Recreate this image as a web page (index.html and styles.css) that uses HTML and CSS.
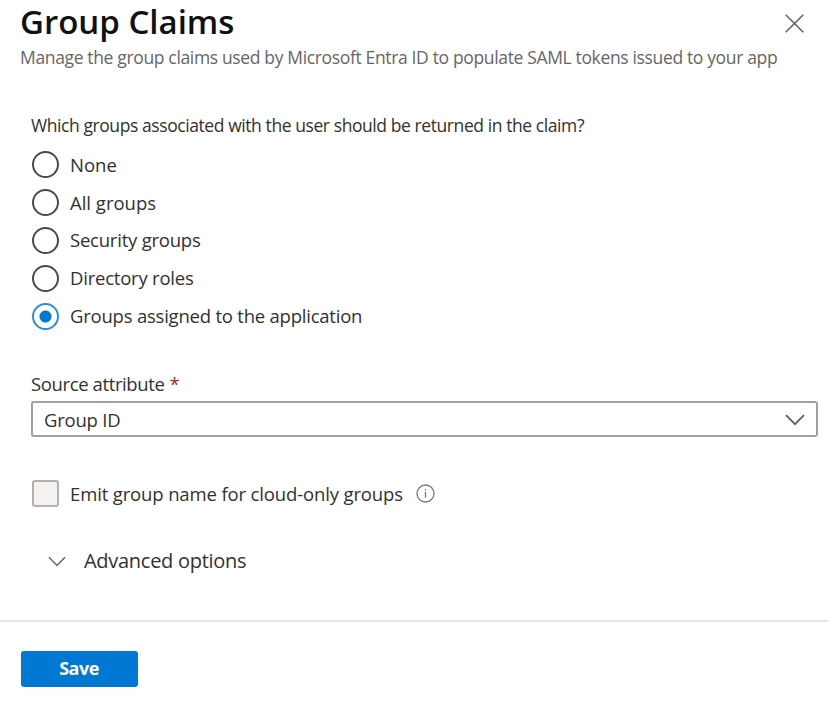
FILE: index.html
```html
<!DOCTYPE html>
<html lang="en">
<head>
    <meta charset="UTF-8">
    <meta name="viewport" content="width=device-width, initial-scale=1.0">
    <title>Group Claims</title>
    <link rel="stylesheet" href="styles.css">
</head>
<body>
    <div class="panel">
        <header class="panel-header">
            <div class="title-row">
                <h1>Group Claims</h1>
                <button type="button" class="close-button" aria-label="Close">
                    <svg width="20" height="20" viewBox="0 0 20 20" fill="none" stroke="#606060" stroke-width="1.5">
                        <path d="M1.7 1.7L19.3 19.3M19.3 1.7L1.7 19.3"/>
                    </svg>
                </button>
            </div>
            <p class="subtitle">Manage the group claims used by Microsoft Entra ID to populate SAML tokens issued to your app</p>
        </header>

        <form class="claims-form">
            <p class="question">Which groups associated with the user should be returned in the claim?</p>
            <div class="radio-group">
                <label class="radio wide"><input type="radio" name="groups"><span>None</span></label>
                <label class="radio wide"><input type="radio" name="groups"><span>All groups</span></label>
                <label class="radio"><input type="radio" name="groups"><span>Security groups</span></label>
                <label class="radio"><input type="radio" name="groups"><span>Directory roles</span></label>
                <label class="radio"><input type="radio" name="groups" checked><span>Groups assigned to the application</span></label>
            </div>

            <div class="field-label"><span>Source attribute</span><span class="required">*</span></div>
            <div class="dropdown" role="combobox" tabindex="0">
                <span>Group ID</span>
                <svg width="20" height="12" viewBox="0 0 20 12" fill="none" stroke="#606060" stroke-width="1.8">
                    <path d="M1 1.2L10 10.2L19 1.2"/>
                </svg>
            </div>

            <div class="checkbox-row">
                <label class="checkbox"><input type="checkbox" disabled><span>Emit group name for cloud-only groups</span></label>
                <svg class="info" width="19" height="19" viewBox="0 0 19 19" fill="none" stroke="#777" stroke-width="1.3">
                    <circle cx="9.5" cy="9.5" r="8.5"/>
                    <path d="M9.5 8v5.5M9.5 5v1.6"/>
                </svg>
            </div>

            <div class="advanced">
                <svg width="18" height="11" viewBox="0 0 18 11" fill="none" stroke="#666" stroke-width="1.5">
                    <path d="M1 1.2L9 9.4L17 1.2"/>
                </svg>
                <span>Advanced options</span>
            </div>
        </form>

        <footer class="panel-footer">
            <button type="button" class="save-button">Save</button>
        </footer>
    </div>
</body>
</html>
```

FILE: styles.css
```css
* {
    box-sizing: border-box;
}

body {
    margin: 0;
    background-color: #fff;
    font-family: 'Open Sans', 'Noto Sans', sans-serif;
    font-size: 18.5px;
    letter-spacing: -0.22px;
    color: #323130;
    white-space: nowrap;
}

h1,
p {
    margin: 0;
}

.panel {
    display: flex;
    flex-direction: column;
    height: 708px;
}

.panel-header {
    padding: 0 24px 0 20px;
}

.title-row {
    display: flex;
    justify-content: space-between;
    height: 42px;
}

h1 {
    font-size: 33px;
    font-weight: 600;
    line-height: 43px;
    letter-spacing: 0;
    color: #111;
}

.close-button {
    display: flex;
    padding: 13px 0 0;
    border: none;
    background: none;
}

.subtitle {
    font-size: 17.5px;
    line-height: 30px;
    color: #666;
    letter-spacing: -0.35px;
}

.claims-form {
    height: 548px;
    padding: 40px 10px 0 31px;
}

.question {
    font-size: 17.5px;
    line-height: 26px;
    letter-spacing: -0.42px;
}

.radio-group {
    height: 233px;
    padding: 8px 0 0 1px;
}

.radio,
.checkbox {
    display: flex;
    align-items: center;
    gap: 11px;
    height: 37.8px;
}

.radio span,
.checkbox span {
    padding-bottom: 1px;
}

.radio.wide {
    letter-spacing: 0;
}

.radio input {
    appearance: none;
    width: 27px;
    height: 27px;
    margin: 0;
    border: 2px solid #4a4a4a;
    border-radius: 50%;
}

.radio input:checked {
    border-color: #2b8ce0;
    background: radial-gradient(circle, #0078d4 5.5px, transparent 6.5px);
}

.field-label {
    display: flex;
    gap: 5px;
    line-height: 26px;
    letter-spacing: -0.38px;
}

.required {
    color: #a4262c;
}

.dropdown {
    display: flex;
    align-items: center;
    justify-content: space-between;
    height: 36px;
    margin-top: 4px;
    padding: 1px 11px 0 11px;
    border: 2px solid #a0a0a0;
    border-radius: 3px;
}

.checkbox-row {
    display: flex;
    align-items: center;
    gap: 13px;
    margin-top: 38px;
    padding-left: 1px;
    letter-spacing: -0.14px;
}

.checkbox input {
    appearance: none;
    width: 27px;
    height: 27px;
    margin: 0;
    border: 2px solid #b3b0ad;
    border-radius: 3px;
    background-color: #f3f2f1;
}

.info {
    margin-bottom: 1px;
}

.advanced {
    display: flex;
    align-items: center;
    gap: 18px;
    height: 40px;
    margin-top: 29px;
    padding-left: 17px;
    font-size: 20px;
    letter-spacing: -0.28px;
}

.advanced span {
    padding-bottom: 2px;
}

.panel-footer {
    flex: 1;
    padding: 29px 21px 0;
    border-top: 2px solid #e6e6e6;
}

.save-button {
    width: 117px;
    height: 36px;
    padding: 0 1px 2px 0;
    border: none;
    border-radius: 3px;
    background-color: #0078d4;
    color: #fff;
    font-family: inherit;
    font-size: 18px;
    font-weight: 700;
    letter-spacing: -0.5px;
}
```
